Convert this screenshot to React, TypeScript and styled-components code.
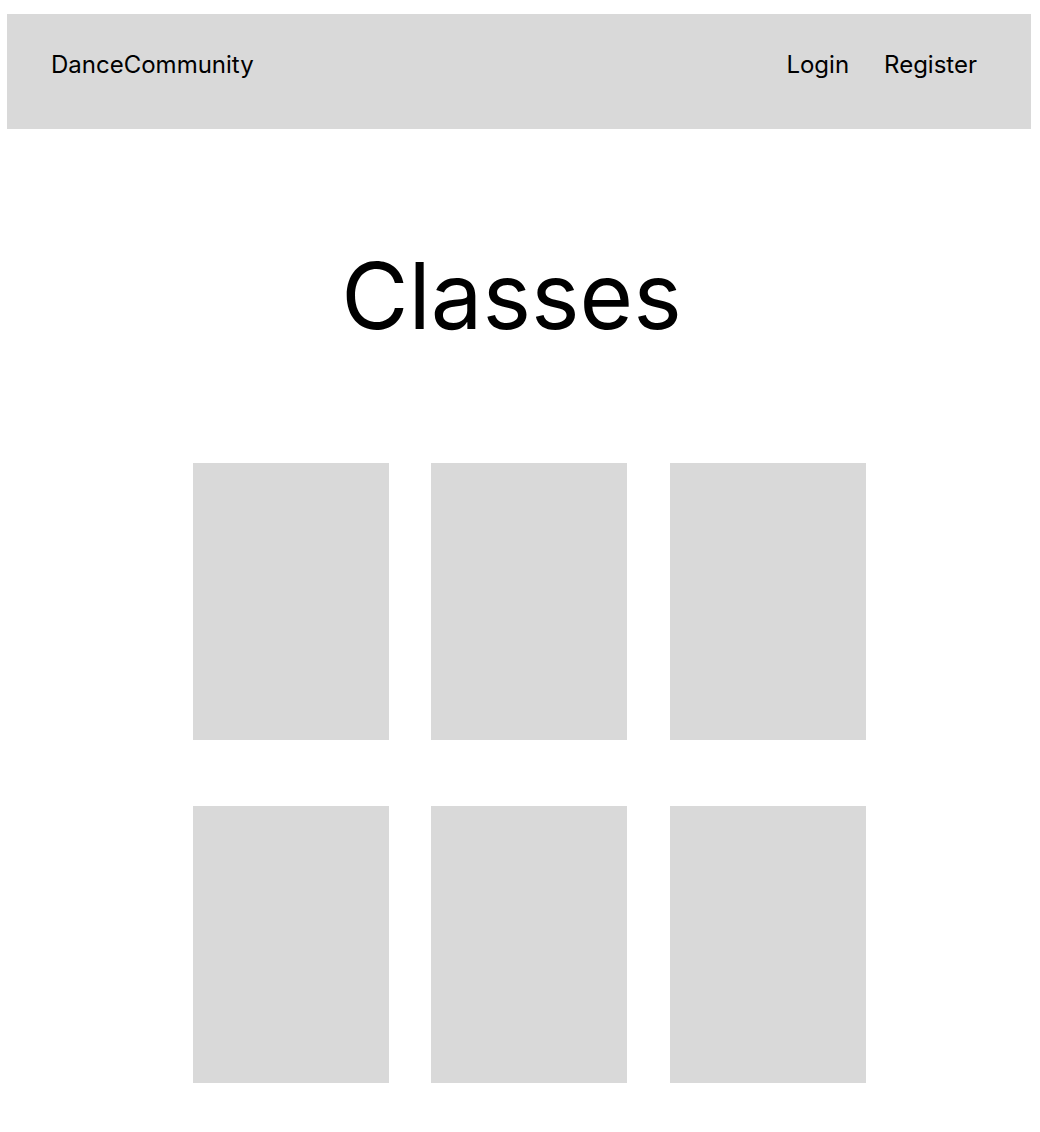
import React from 'react';
import styled, { createGlobalStyle } from 'styled-components';

const GlobalStyle = createGlobalStyle`
  html, body {
    margin: 0;
    padding: 0;
    background: #ffffff;
  }
  body {
    font-family: Inter, "Noto Sans", Arial, sans-serif;
    color: #000000;
  }
`;

const Page = styled.div`
  width: 1024px;
  padding: 14px 0 40px 7px;
`;

const Header = styled.header`
  height: 115px;
  box-sizing: border-box;
  background: #d9d9d9;
  display: flex;
  justify-content: space-between;
  align-items: flex-start;
  padding: 36px 54px 0 44px;
`;

const Brand = styled.div`
  font-size: 24px;
  font-weight: 400;
`;

const Nav = styled.nav`
  display: flex;
  gap: 35px;
`;

const NavLink = styled.a`
  font-size: 24px;
  color: #000;
  text-decoration: none;
`;

const Title = styled.h1`
  margin: 111px 0 0;
  padding-right: 15px;
  text-align: center;
  font-size: 92px;
  font-weight: 400;
  line-height: normal;
`;

const Grid = styled.div`
  display: grid;
  grid-template-columns: repeat(3, 196px);
  column-gap: 42.4px;
  row-gap: 66px;
  margin: 112px 0 0 186px;
`;

const Card = styled.div`
  height: 277px;
  background: #d9d9d9;
`;

export default function App() {
  const classes = [1, 2, 3, 4, 5, 6];
  return (
    <>
      <GlobalStyle />
      <Page>
        <Header>
          <Brand>DanceCommunity</Brand>
          <Nav>
            <NavLink href="#">Login</NavLink>
            <NavLink href="#">Register</NavLink>
          </Nav>
        </Header>
        <Title>Classes</Title>
        <Grid>
          {classes.map(c => (
            <Card key={c} />
          ))}
        </Grid>
      </Page>
    </>
  );
}
